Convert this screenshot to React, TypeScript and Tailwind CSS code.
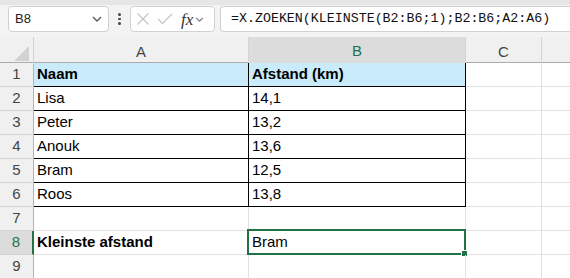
import React from 'react';

const rows: [string, string][] = [
  ['Naam', 'Afstand (km)'],
  ['Lisa', '14,1'],
  ['Peter', '13,2'],
  ['Anouk', '13,6'],
  ['Bram', '12,5'],
  ['Roos', '13,8'],
  ['', ''],
  ['Kleinste afstand', 'Bram'],
  ['', ''],
];

function Chevron({ className }: { className?: string }) {
  return (
    <svg viewBox="0 0 10 6" className={className} fill="none" stroke="currentColor" strokeWidth="1.3">
      <path d="M1 1l4 4 4-4" />
    </svg>
  );
}

export default function App() {
  return (
    <div className="w-[570px] h-[278px] overflow-hidden bg-white font-['Liberation_Sans',sans-serif] text-[15px] text-black">
      <div className="h-[5px] bg-[#e6e6e6]" />

      {/* formula bar */}
      <div className="flex h-[32px] items-start bg-[#f3f3f3] pl-[8px] pt-[1px]">
        <div className="flex h-[26px] w-[101px] items-center justify-between rounded-[4px] border border-[#d1d1d1] bg-white pl-[6px] pr-[6px] text-[13px] text-[#222]">
          <span>B8</span>
          <Chevron className="h-[6px] w-[10px] text-[#555]" />
        </div>
        <div className="flex w-[21px] h-[26px] flex-col items-center justify-center gap-[2px]">
          <span className="h-[2.5px] w-[2.5px] rounded-full bg-[#444]" />
          <span className="h-[2.5px] w-[2.5px] rounded-full bg-[#444]" />
          <span className="h-[2.5px] w-[2.5px] rounded-full bg-[#444]" />
        </div>
        <div className="flex h-[26px] w-[85px] items-center rounded-[4px] border border-[#d1d1d1] bg-white pl-[5px]">
          <svg viewBox="0 0 14 14" className="h-[14px] w-[14px] text-[#c4c4c4]" fill="none" stroke="currentColor" strokeWidth="1.2">
            <path d="M1.5 1.5l11 11M12.5 1.5l-11 11" />
          </svg>
          <svg viewBox="0 0 16 12" className="ml-[7px] h-[12px] w-[16px] text-[#c4c4c4]" fill="none" stroke="currentColor" strokeWidth="1.2">
            <path d="M1 6l4.5 4.5L15 1" />
          </svg>
          <span className="ml-[8px] font-['Liberation_Serif',serif] text-[17px] italic leading-none text-[#333]">fx</span>
          <Chevron className="ml-[2px] h-[5px] w-[9px] text-[#777]" />
        </div>
        <div className="ml-[5px] flex h-[26px] flex-1 items-center rounded-l-[4px] border border-r-0 border-[#d1d1d1] bg-white pl-[10px] font-['Liberation_Mono',monospace] text-[13.3px] text-[#111] whitespace-nowrap">
          =X.ZOEKEN(KLEINSTE(B2:B6;1);B2:B6;A2:A6)
        </div>
      </div>

      {/* column headers */}
      <div className="grid h-[26px] grid-cols-[34px_215px_217px_76px_1fr] border-b border-[#ababab] bg-[#f0f0f0] text-[#444]">
        <div className="relative border-r border-[#d4d4d4]">
          <div className="absolute bottom-[3px] right-[4px] h-0 w-0 border-b-[15px] border-l-[15px] border-b-[#d2d2d2] border-l-transparent" />
        </div>
        <div className="flex items-center justify-center border-r border-[#d4d4d4] pt-[3px]">A</div>
        <div className="mb-[-1px] flex items-center justify-center border-r border-b-2 border-[#d4d4d4] border-b-[#217346] bg-[#dcdcdc] pt-[3px] text-[#217346]">B</div>
        <div className="flex items-center justify-center border-r border-[#d4d4d4] pt-[3px]">C</div>
        <div />
      </div>

      {/* rows */}
      {rows.map(([a, b], i) => {
        const n = i + 1;
        const inTable = n <= 6;
        const bold = n === 1 || n === 8;
        const selected = n === 8;
        const headerBg = n === 1 ? 'bg-[#c9ebfa]' : '';
        return (
          <div key={n} className="grid h-[24px] grid-cols-[34px_215px_217px_76px_1fr]">
            <div
              className={
                selected
                  ? 'flex items-center justify-center border-b border-r-2 border-b-[#d4d4d4] border-r-[#217346] bg-[#dcdcdc] text-[#217346]'
                  : 'flex items-center justify-center border-b border-r border-b-[#d4d4d4] border-r-[#b4b4b4] bg-[#f0f0f0] text-[#444]'
              }
            >
              {n}
            </div>
            <div
              className={`flex items-center border-b border-r pl-[3px] ${headerBg} ${
                inTable ? 'border-black' : 'border-[#e1e1e1]'
              } ${bold ? 'font-bold' : ''}`}
            >
              {a}
            </div>
            <div
              className={`relative flex items-center border-b border-r pl-[3px] ${headerBg} ${
                inTable ? 'border-black' : 'border-[#e1e1e1]'
              } ${n === 1 ? 'font-bold' : ''}`}
            >
              {b}
              {selected && (
                <>
                  <div className="pointer-events-none absolute -left-[2px] -top-[2px] -right-[1px] -bottom-[1px] border-2 border-[#217346]" />
                  <div className="absolute -bottom-[3px] -right-[3px] box-content h-[5px] w-[5px] border border-white bg-[#217346]" />
                </>
              )}
            </div>
            <div className="border-b border-r border-[#e1e1e1]" />
            <div className="border-b border-[#e1e1e1]" />
          </div>
        );
      })}
    </div>
  );
}
